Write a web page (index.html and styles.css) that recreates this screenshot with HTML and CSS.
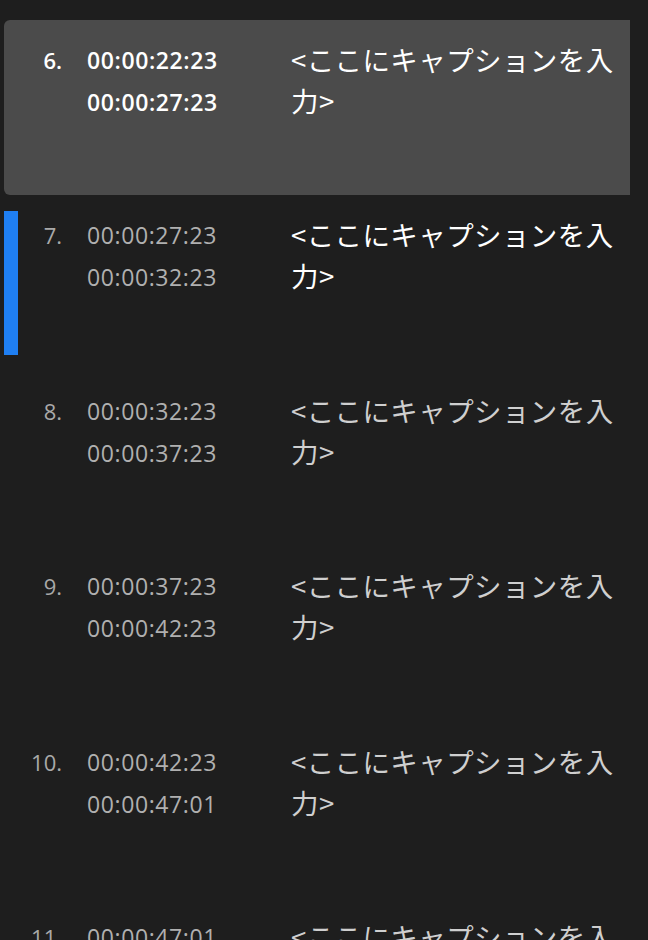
FILE: index.html
```html
<!DOCTYPE html>
<html lang="ja">
<head>
<meta charset="utf-8">
<link rel="stylesheet" href="styles.css">
</head>
<body>
<div class="list">
  <div class="row selected">
    <div class="num">6.</div>
    <div class="times"><div>00:00:22:23</div><div>00:00:27:23</div></div>
    <div class="caption">&lt;ここにキャプションを入力&gt;</div>
  </div>
  <div class="row current">
    <div class="num">7.</div>
    <div class="times"><div>00:00:27:23</div><div>00:00:32:23</div></div>
    <div class="caption">&lt;ここにキャプションを入力&gt;</div>
  </div>
  <div class="row">
    <div class="num">8.</div>
    <div class="times"><div>00:00:32:23</div><div>00:00:37:23</div></div>
    <div class="caption">&lt;ここにキャプションを入力&gt;</div>
  </div>
  <div class="row">
    <div class="num">9.</div>
    <div class="times"><div>00:00:37:23</div><div>00:00:42:23</div></div>
    <div class="caption">&lt;ここにキャプションを入力&gt;</div>
  </div>
  <div class="row">
    <div class="num">10.</div>
    <div class="times"><div>00:00:42:23</div><div>00:00:47:01</div></div>
    <div class="caption">&lt;ここにキャプションを入力&gt;</div>
  </div>
  <div class="row">
    <div class="num">11.</div>
    <div class="times"><div>00:00:47:01</div><div>00:00:52:01</div></div>
    <div class="caption">&lt;ここにキャプションを入力&gt;</div>
  </div>
</div>
</body>
</html>
```
FILE: styles.css
```css
html, body {
  margin: 0;
  padding: 0;
  background: #1e1e1e;
  overflow: hidden;
}
body {
  width: 648px;
  height: 940px;
}
.list {
  padding: 20px 0 0 4px;
  width: 626px;
}
.row {
  position: relative;
  display: grid;
  grid-template-columns: 58px 228px 1fr;
  height: 175.4px;
  box-sizing: border-box;
  padding-top: 19px;
  line-height: 42px;
  border-radius: 6px 0 0 6px;
}
.row.selected {
  background: #4b4b4b;
}
.row.current::before {
  content: "";
  position: absolute;
  left: 0;
  top: 16px;
  width: 14px;
  height: 144px;
  background: #1f7ff2;
}
.num {
  text-align: right;
  font-family: "Open Sans", "Noto Sans", sans-serif;
  font-size: 22px;
  color: #a9a9a9;
}
.times {
  padding-left: 25px;
  font-family: "Open Sans", "Noto Sans", sans-serif;
  font-size: 23px;
  color: #b0b0b0;
  letter-spacing: 0.6px;
}
.caption {
  font-family: "Noto Sans CJK JP", "Noto Sans", sans-serif;
  font-size: 27.5px;
  letter-spacing: 0.4px;
  color: #cfcfcf;
  padding-left: 1px;
  line-height: 41px;
}
.selected .num,
.selected .times {
  color: #ffffff;
  font-weight: 600;
}
.selected .caption,
.current .caption {
  color: #ffffff;
}
```
